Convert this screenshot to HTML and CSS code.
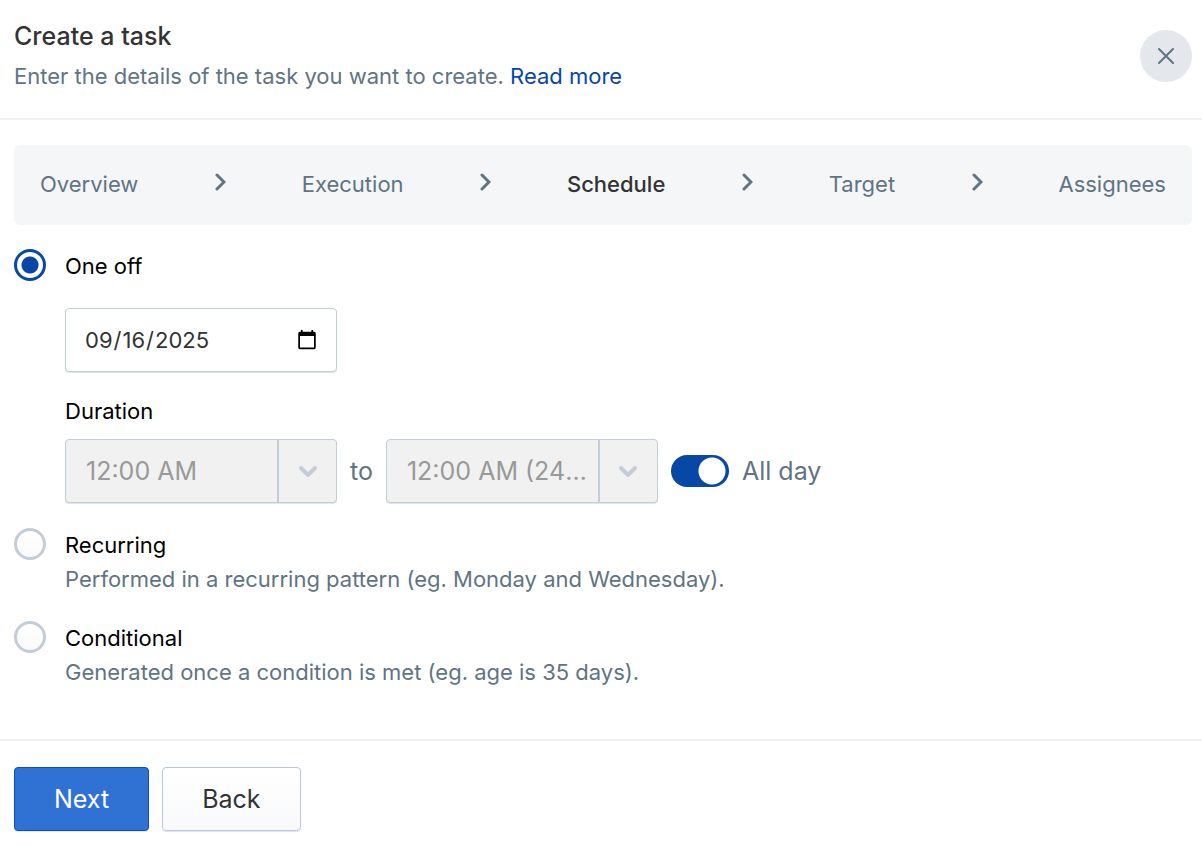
FILE: index.html
```html
<!DOCTYPE html>
<html lang="en">
<head>
  <meta charset="UTF-8" />
  <meta name="viewport" content="width=device-width, initial-scale=1.0"/>
  <title>Create a task</title>
  <link rel="stylesheet" href="styles.css">
</head>
<body>
  <form class="dialog">
    <header class="dialog-header">
      <div>
        <h1>Create a task</h1>
        <p>Enter the details of the task you want to create. <a href="#">Read more</a></p>
      </div>
      <button type="button" class="close" aria-label="Close">
        <svg width="18" height="18" viewBox="0 0 18 18"><path d="M2 2l14 14M16 2L2 16"/></svg>
      </button>
    </header>

    <main class="dialog-body">
      <nav class="steps">
        <span>Overview</span>
        <svg class="arrow" width="12" height="22" viewBox="0 0 12 22"><path d="M3 2l7 7-7 7"/></svg>
        <span>Execution</span>
        <svg class="arrow" width="12" height="22" viewBox="0 0 12 22"><path d="M3 2l7 7-7 7"/></svg>
        <span class="current">Schedule</span>
        <svg class="arrow" width="12" height="22" viewBox="0 0 12 22"><path d="M3 2l7 7-7 7"/></svg>
        <span>Target</span>
        <svg class="arrow" width="12" height="22" viewBox="0 0 12 22"><path d="M3 2l7 7-7 7"/></svg>
        <span>Assignees</span>
      </nav>

      <div class="option">
        <input type="radio" name="schedule" id="one-off" checked>
        <div class="option-content">
          <label for="one-off">One off</label>
          <input type="date" class="date" value="2025-09-16" aria-label="Date">

          <div class="duration-title">Duration</div>
          <div class="duration">
            <div class="select">
              <select disabled aria-label="Start time">
                <option>12:00 AM</option>
              </select>
              <svg width="20" height="12" viewBox="0 0 20 12"><path d="M3 3l7 7 7-7"/></svg>
            </div>
            <span>to</span>
            <div class="select">
              <select disabled aria-label="End time">
                <option>12:00 AM (24 hours)</option>
              </select>
              <svg width="20" height="12" viewBox="0 0 20 12"><path d="M3 3l7 7 7-7"/></svg>
            </div>
            <input type="checkbox" class="switch" id="all-day" checked>
            <label for="all-day">All day</label>
          </div>
        </div>
      </div>

      <div class="option">
        <input type="radio" name="schedule" id="recurring">
        <div class="option-content">
          <label for="recurring">Recurring</label>
          <p>Performed in a recurring pattern (eg. Monday and Wednesday).</p>
        </div>
      </div>

      <div class="option">
        <input type="radio" name="schedule" id="conditional">
        <div class="option-content">
          <label for="conditional">Conditional</label>
          <p>Generated once a condition is met (eg. age is 35 days).</p>
        </div>
      </div>
    </main>

    <footer class="dialog-footer">
      <button type="button" class="btn primary">Next</button>
      <button type="button" class="btn">Back</button>
    </footer>
  </form>
</body>
</html>
```

FILE: styles.css
```css
* {
  box-sizing: border-box;
  margin: 0;
  padding: 0;
}

body {
  font-family: Inter, "Liberation Sans", sans-serif;
  font-size: 22px;
  line-height: 34px;
  color: #607483;
  background: #fff;
}

button,
input,
select {
  font-family: inherit;
}

svg {
  fill: none;
  stroke: #607483;
  stroke-width: 3;
  stroke-linecap: round;
}

/* Header */
.dialog-header {
  display: flex;
  justify-content: space-between;
  align-items: center;
  padding: 16px 10px 22px 14px;
  border-bottom: 2px solid #eff1f4;
}

.dialog-header h1 {
  font-size: 25px;
  font-weight: 500;
  line-height: 40px;
  color: #333;
}

.dialog-header p {
  margin: 3px 0;
}

.dialog-header a {
  color: #0747a6;
  text-decoration: none;
}

.close {
  display: flex;
  align-items: center;
  justify-content: center;
  width: 52px;
  height: 52px;
  border: none;
  border-radius: 50%;
  background: #e4e8ed;
  cursor: pointer;
}

.close svg {
  stroke-width: 2;
}

/* Steps */
.dialog-body {
  padding: 25px 10px 50px 14px;
}

.steps {
  display: flex;
  justify-content: space-between;
  align-items: center;
  padding: 22px 26px 24px;
  margin-bottom: 24px;
  border-radius: 6px;
  background: #f4f6f8;
}

.steps .current {
  font-weight: 500;
  color: #333;
}

/* Schedule options */
.option {
  display: flex;
  gap: 19px;
  margin-bottom: 25px;
}

.option:last-child {
  margin-bottom: 0;
}

.option-content > label,
.duration-title {
  display: block;
  color: #000;
}

input[type="radio"] {
  appearance: none;
  flex: none;
  width: 32px;
  height: 32px;
  border: 3px solid #c3cdd8;
  border-radius: 50%;
  background: linear-gradient(#fff, #f9fafb);
}

input[type="radio"]:checked {
  border-color: #0747a6;
  background: radial-gradient(circle, #0747a6 8px, #fff 9px);
}

.date {
  display: block;
  width: 272px;
  height: 64px;
  margin: 25px 0 22px;
  padding: 0 18px;
  border: 1px solid #c3cdd8;
  border-radius: 4px;
  background: #fff;
  box-shadow: 0 1px 1px #dfe4ea;
  font-size: 22px;
  color: #333;
}

.date::-webkit-calendar-picker-indicator {
  width: 22px;
  height: 22px;
  padding: 0;
}

.duration {
  display: flex;
  align-items: center;
  gap: 13px;
  margin-top: 11px;
  font-size: 25px;
}

/* text on the left, arrow in its own column */
.select {
  display: grid;
  grid-template-columns: 213px 57px;
  height: 64px;
  border: 1px solid #c3cdd8;
  border-radius: 4px;
  background: #f1f1f1;
  box-shadow: 0 1px 1px #dfe4ea;
}

.select select {
  appearance: none;
  min-width: 0;
  padding: 0 6px 0 20px;
  border: none;
  border-right: 2px solid #c3cdd8;
  background: none;
  font-size: 25px;
  color: #999;
  opacity: 1;
  text-overflow: ellipsis;
}

.select svg {
  place-self: center;
  stroke: #c3cdd8;
  stroke-width: 4;
}

.switch {
  appearance: none;
  width: 58px;
  height: 32px;
  border-radius: 16px;
  background: radial-gradient(circle at 41px 50%, #fff 13px, #0747a6 14px);
}

/* Footer */
.dialog-footer {
  display: flex;
  gap: 13px;
  padding: 26px 14px;
  border-top: 2px solid #eff1f4;
}

.btn {
  height: 64px;
  padding: 0 39px;
  border: 1px solid #b8c7dd;
  border-radius: 4px;
  background: linear-gradient(#fff, #f8f9fb);
  box-shadow: 0 1px 1px #dfe4ea;
  font-size: 25px;
  color: #333;
  cursor: pointer;
}

.btn.primary {
  border-color: #0c50b5;
  background: #3072d3;
  color: #fff;
}
```
